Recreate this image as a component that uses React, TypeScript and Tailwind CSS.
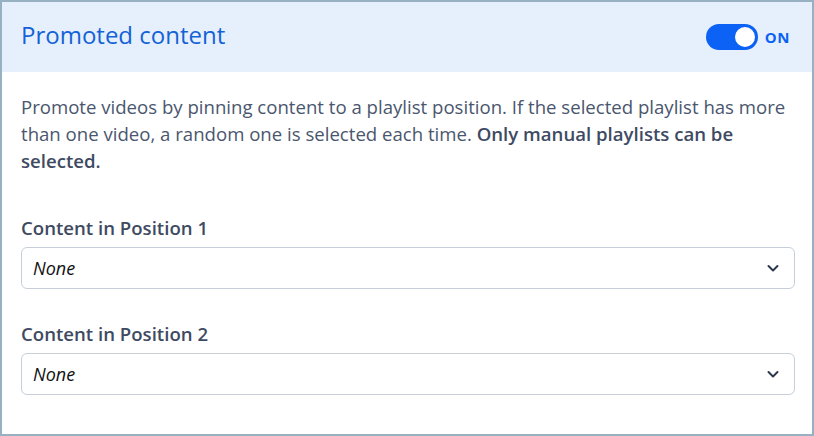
import React from "react";

function Chevron() {
  return (
    <svg width="14" height="14" viewBox="0 0 14 14" fill="none" className="shrink-0">
      <path d="M2.5 5 L7 9.5 L11.5 5" stroke="#2c3850" strokeWidth="2" strokeLinecap="round" strokeLinejoin="round" />
    </svg>
  );
}

function Field({ label }: { label: string }) {
  return (
    <div className="flex flex-col">
      <label className="text-[18.6px] leading-[27px] font-semibold text-[#3e4a62]">{label}</label>
      <div className="mt-[6px] h-[42px] w-full rounded-[6px] border border-[#c7cfd9] bg-white flex items-center justify-between pl-[11px] pr-[14px]">
        <span className="text-[18px] italic text-[#111111]">None</span>
        <Chevron />
      </div>
    </div>
  );
}

export default function App() {
  return (
    <div
      className="w-[814px] h-[436px] border-2 border-[#97b1c3] bg-white flex flex-col"
      style={{ fontFamily: '"Open Sans", "Noto Sans", sans-serif' }}
    >
      <div className="h-[70px] shrink-0 bg-[#e6f0fd] flex items-center justify-between pl-[19px] pr-[22px]">
        <h1 className="text-[24px] leading-none text-[#1462d6] font-normal mb-[5px]">Promoted content</h1>
        <div className="flex items-center gap-[7px]">
          <div className="w-[52px] h-[26px] rounded-full bg-[#0b62f4] flex items-center justify-end pr-[1px]">
            <div className="w-[24px] h-[24px] rounded-full bg-white border-2 border-[#0b62f4]" />
          </div>
          <span className="text-[15px] font-bold text-[#0b62f4] tracking-[0.5px]">ON</span>
        </div>
      </div>
      <div className="flex flex-col pl-[19px] pr-[17px] pt-[21px]">
        <p className="text-[18.6px] leading-[27px] text-[#4a566e]">
          Promote videos by pinning content to a playlist position. If the selected playlist has more than one video, a random one is selected each time.{" "}
          <span className="font-semibold text-[#3e4a62]">Only manual playlists can be selected.</span>
        </p>
        <div className="mt-[40px]">
          <Field label="Content in Position 1" />
        </div>
        <div className="mt-[31px]">
          <Field label="Content in Position 2" />
        </div>
      </div>
    </div>
  );
}
